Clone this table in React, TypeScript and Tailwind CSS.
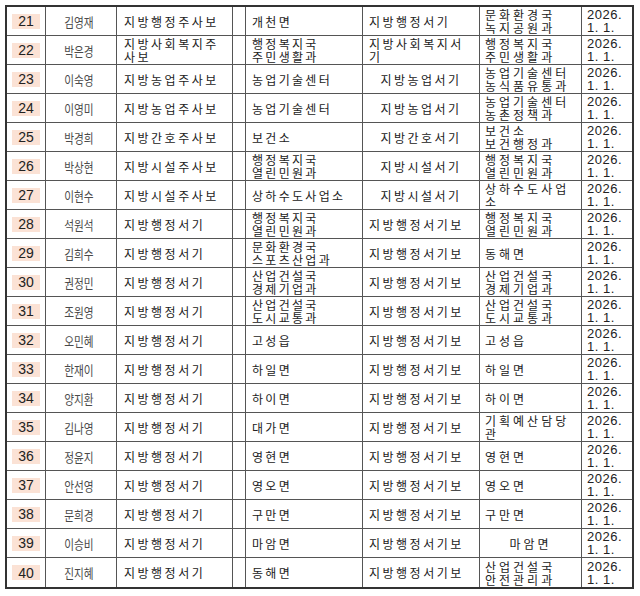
type Row = {
  no: number;
  name: string;
  rank: string[];
  dept: string[];
  newRank: string[];
  newDept: string[];
  centerRank?: boolean;
  centerDept?: boolean;
};

const rows: Row[] = [
  { no: 21, name: '김영재', rank: ['지방행정주사보'], dept: ['개천면'], newRank: ['지방행정서기'], newDept: ['문화환경국', '녹지공원과'] },
  { no: 22, name: '박은경', rank: ['지방사회복지주', '사보'], dept: ['행정복지국', '주민생활과'], newRank: ['지방사회복지서', '기'], newDept: ['행정복지국', '주민생활과'] },
  { no: 23, name: '이숙영', rank: ['지방농업주사보'], dept: ['농업기술센터'], newRank: ['지방농업서기'], newDept: ['농업기술센터', '농식품유통과'], centerRank: true },
  { no: 24, name: '이영미', rank: ['지방농업주사보'], dept: ['농업기술센터'], newRank: ['지방농업서기'], newDept: ['농업기술센터', '농촌정책과'], centerRank: true },
  { no: 25, name: '박경희', rank: ['지방간호주사보'], dept: ['보건소'], newRank: ['지방간호서기'], newDept: ['보건소', '보건행정과'], centerRank: true },
  { no: 26, name: '박상현', rank: ['지방시설주사보'], dept: ['행정복지국', '열린민원과'], newRank: ['지방시설서기'], newDept: ['행정복지국', '열린민원과'], centerRank: true },
  { no: 27, name: '이현수', rank: ['지방시설주사보'], dept: ['상하수도사업소'], newRank: ['지방시설서기'], newDept: ['상하수도사업', '소'], centerRank: true },
  { no: 28, name: '석원석', rank: ['지방행정서기'], dept: ['행정복지국', '열린민원과'], newRank: ['지방행정서기보'], newDept: ['행정복지국', '열린민원과'] },
  { no: 29, name: '김희수', rank: ['지방행정서기'], dept: ['문화환경국', '스포츠산업과'], newRank: ['지방행정서기보'], newDept: ['동해면'] },
  { no: 30, name: '권정민', rank: ['지방행정서기'], dept: ['산업건설국', '경제기업과'], newRank: ['지방행정서기보'], newDept: ['산업건설국', '경제기업과'] },
  { no: 31, name: '조원영', rank: ['지방행정서기'], dept: ['산업건설국', '도시교통과'], newRank: ['지방행정서기보'], newDept: ['산업건설국', '도시교통과'] },
  { no: 32, name: '오민혜', rank: ['지방행정서기'], dept: ['고성읍'], newRank: ['지방행정서기보'], newDept: ['고성읍'] },
  { no: 33, name: '한재이', rank: ['지방행정서기'], dept: ['하일면'], newRank: ['지방행정서기보'], newDept: ['하일면'] },
  { no: 34, name: '양지환', rank: ['지방행정서기'], dept: ['하이면'], newRank: ['지방행정서기보'], newDept: ['하이면'] },
  { no: 35, name: '김나영', rank: ['지방행정서기'], dept: ['대가면'], newRank: ['지방행정서기보'], newDept: ['기획예산담당', '관'] },
  { no: 36, name: '정윤지', rank: ['지방행정서기'], dept: ['영현면'], newRank: ['지방행정서기보'], newDept: ['영현면'] },
  { no: 37, name: '안선영', rank: ['지방행정서기'], dept: ['영오면'], newRank: ['지방행정서기보'], newDept: ['영오면'] },
  { no: 38, name: '문희경', rank: ['지방행정서기'], dept: ['구만면'], newRank: ['지방행정서기보'], newDept: ['구만면'] },
  { no: 39, name: '이승비', rank: ['지방행정서기'], dept: ['마암면'], newRank: ['지방행정서기보'], newDept: ['마암면'], centerDept: true },
  { no: 40, name: '진지혜', rank: ['지방행정서기'], dept: ['동해면'], newRank: ['지방행정서기보'], newDept: ['산업건설국', '안전관리과'] },
];

const kr = "font-['Noto_Sans_CJK_KR',sans-serif]";

function Lines({ lines }: { lines: string[] }) {
  return (
    <div className="flex flex-col">
      {lines.map((l, i) => (
        <span key={i} className="whitespace-nowrap">
          {l}
        </span>
      ))}
    </div>
  );
}

export default function App() {
  return (
    <div className="w-[640px] h-[596px] bg-white pt-[5px] pl-[5px]">
      <div className="w-[629px] h-[584px] border-x-2 border-b-2 border-t-2 border-[#333] grid grid-cols-[39px_71px_116px_13px_117px_117px_102px_50px] grid-rows-[repeat(20,minmax(0,1fr))]">
        {rows.map((r, idx) => {
          const last = idx === rows.length - 1;
          const cell = `${last ? '' : 'border-b'} border-[#555] flex items-center min-w-0`;
          return (
            <div key={r.no} className="contents">
              <div className={`${cell} border-r pl-[5px]`}>
                <div className="w-[28px] h-[15px] bg-[#fbe2d5] flex items-center justify-center font-['Liberation_Sans',sans-serif] text-[14px] leading-none text-[#222]">
                  {r.no}
                </div>
              </div>
              <div className={`${cell} border-r justify-center pr-[5px]`}>
                <span className={`${kr} inline-block text-[13px] leading-none text-[#4a4a4a] scale-x-[0.82]`}>
                  {r.name}
                </span>
              </div>
              <div className={`${cell} border-r pl-[7px] ${kr} text-[12px] leading-[13px] tracking-[2.5px] text-[#222]`}>
                <Lines lines={r.rank} />
              </div>
              <div className={`${cell} border-r`} />
              <div className={`${cell} border-r pl-[6px] ${kr} text-[12px] leading-[13px] tracking-[2.3px] text-[#222]`}>
                <Lines lines={r.dept} />
              </div>
              <div
                className={`${cell} border-r ${r.centerRank ? 'justify-center' : 'pl-[6px]'} ${kr} text-[12px] leading-[13px] tracking-[2.5px] text-[#222]`}
              >
                <Lines lines={r.newRank} />
              </div>
              <div
                className={`${cell} border-r ${r.centerDept ? 'justify-center' : 'pl-[5px]'} ${kr} text-[12px] leading-[13px] tracking-[3px] text-[#222]`}
              >
                <Lines lines={r.newDept} />
              </div>
              <div className={`${cell} pl-[5px] font-['Liberation_Sans',sans-serif] text-[13px] leading-[13px] tracking-[0.5px] text-[#222]`}>
                <Lines lines={['2026.', '1.  1.']} />
              </div>
            </div>
          );
        })}
      </div>
    </div>
  );
}
